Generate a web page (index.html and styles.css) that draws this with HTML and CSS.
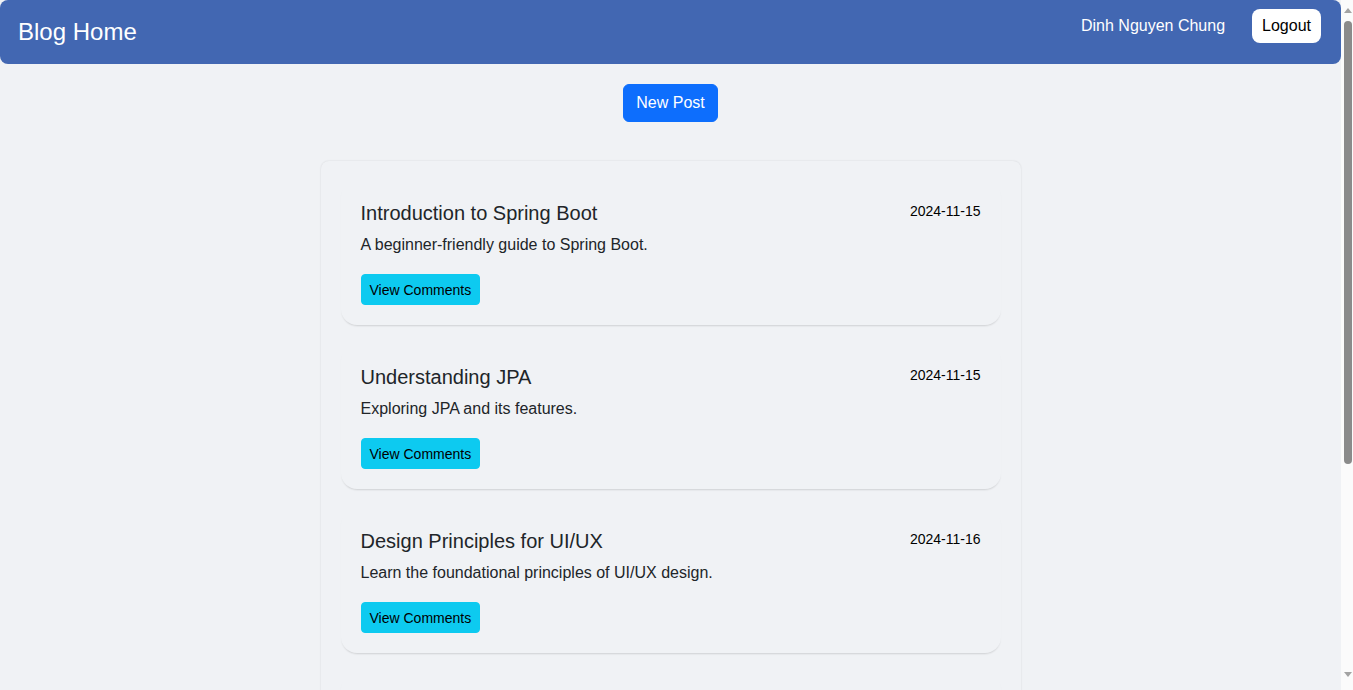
FILE: index.html
```html
<!DOCTYPE html>
<html lang="en">
<head>
<meta charset="utf-8">
<title>Blog Home</title>
<link rel="stylesheet" href="styles.css">
</head>
<body>
<div class="page">
  <header class="topbar">
    <h1 class="brand">Blog Home</h1>
    <div class="user-area">
      <span class="user-name">Dinh Nguyen Chung</span>
      <button class="btn-logout">Logout</button>
    </div>
  </header>

  <div class="actions">
    <button class="btn-new">New Post</button>
  </div>

  <main class="post-list">
    <article class="post">
      <div class="post-head">
        <h2 class="post-title">Introduction to Spring Boot</h2>
        <span class="post-date">2024-11-15</span>
      </div>
      <p class="post-desc">A beginner-friendly guide to Spring Boot.</p>
      <button class="btn-comments">View Comments</button>
    </article>
    <article class="post">
      <div class="post-head">
        <h2 class="post-title">Understanding JPA</h2>
        <span class="post-date">2024-11-15</span>
      </div>
      <p class="post-desc">Exploring JPA and its features.</p>
      <button class="btn-comments">View Comments</button>
    </article>
    <article class="post">
      <div class="post-head">
        <h2 class="post-title">Design Principles for UI/UX</h2>
        <span class="post-date">2024-11-16</span>
      </div>
      <p class="post-desc">Learn the foundational principles of UI/UX design.</p>
      <button class="btn-comments">View Comments</button>
    </article>
    <article class="post">
      <div class="post-head">
        <h2 class="post-title">Getting Started with React</h2>
        <span class="post-date">2024-11-17</span>
      </div>
      <p class="post-desc">Build your first component-based web application.</p>
      <button class="btn-comments">View Comments</button>
    </article>
    <article class="post">
      <div class="post-head">
        <h2 class="post-title">REST API Best Practices</h2>
        <span class="post-date">2024-11-18</span>
      </div>
      <p class="post-desc">Tips for designing clean and consistent APIs.</p>
      <button class="btn-comments">View Comments</button>
    </article>
  </main>
</div>
<div class="scroll-rail" aria-hidden="true">
  <span class="rail-arrow rail-up"></span>
  <span class="rail-thumb"></span>
  <span class="rail-arrow rail-down"></span>
</div>
</body>
</html>
```

FILE: styles.css
```css
* {
  box-sizing: border-box;
}

html, body {
  margin: 0;
  padding: 0;
  height: 100%;
  overflow: hidden;
}

body {
  display: flex;
  background: #f0f2f5;
  font-family: "Liberation Sans", Arial, sans-serif;
  font-size: 16px;
  line-height: 1.5;
  color: #212529;
}

.page {
  flex: 1;
  min-width: 0;
  height: 100vh;
  overflow-y: auto;
  padding-bottom: 36px;
  scrollbar-width: none;
}

.page::-webkit-scrollbar {
  display: none;
}

/* scroll indicator rail */
.scroll-rail {
  width: 12px;
  flex: none;
  height: 100vh;
  background: #fbfbfb;
  display: flex;
  flex-direction: column;
  align-items: flex-start;
  padding-left: 3px;
}

.rail-arrow {
  width: 0;
  height: 0;
  border-left: 4px solid transparent;
  border-right: 4px solid transparent;
}

.rail-up {
  margin-top: 8px;
  border-bottom: 5px solid #a3a3a3;
}

.rail-thumb {
  margin-top: 8px;
  width: 8px;
  height: 443px;
  border-radius: 4px;
  background: #8b8b8b;
}

.rail-down {
  margin-top: auto;
  margin-bottom: 13px;
  border-top: 5px solid #a3a3a3;
}

button {
  font-family: "Liberation Sans", Arial, sans-serif;
  cursor: pointer;
}

.topbar {
  height: 64px;
  background: #4267b2;
  border-radius: 8px;
  padding: 0 20px 0 18px;
  display: flex;
  justify-content: space-between;
  align-items: center;
}

.brand {
  margin: 0;
  font-size: 24px;
  font-weight: normal;
  line-height: 1.2;
  color: #ffffff;
}

.user-area {
  align-self: flex-start;
  margin-top: 9px;
  display: flex;
  align-items: center;
  gap: 27px;
}

.user-name {
  color: #ffffff;
  font-size: 16px;
  line-height: 34px;
}

.btn-logout {
  height: 34px;
  padding: 0 10px;
  border: none;
  border-radius: 8px;
  background: #ffffff;
  color: #000000;
  font-size: 16px;
}

.actions {
  display: flex;
  justify-content: center;
  padding-top: 20px;
}

.btn-new {
  height: 38px;
  padding: 0 12px;
  border: 1px solid #0d6efd;
  border-radius: 6px;
  background: #0d6efd;
  color: #ffffff;
  font-size: 16px;
}

.post-list {
  width: 700px;
  margin: 39px auto 0;
  padding: 20px;
  background: #f0f2f5;
  border-radius: 8px;
  box-shadow: 0 0 2px rgba(0, 0, 0, 0.12);
}

.post {
  padding: 20px;
  margin-bottom: 20px;
  border-radius: 16px;
  background: #f0f2f5;
  box-shadow: 0 2px 2px -1px rgba(0, 0, 0, 0.14);
}

.post:last-child {
  margin-bottom: 0;
}

.post-head {
  display: flex;
  justify-content: space-between;
  align-items: flex-start;
}

.post-title {
  margin: 0 0 8px;
  font-size: 20px;
  font-weight: normal;
  line-height: 24px;
}

.post-date {
  font-size: 14px;
  line-height: 21px;
  color: #000000;
}

.post-desc {
  margin: 0 0 17px;
  font-size: 16px;
  line-height: 24px;
}

.btn-comments {
  height: 31px;
  padding: 0 8px;
  border: 1px solid #0dcaf0;
  border-radius: 4px;
  background: #0dcaf0;
  color: #000000;
  font-size: 14px;
  display: block;
}
```
